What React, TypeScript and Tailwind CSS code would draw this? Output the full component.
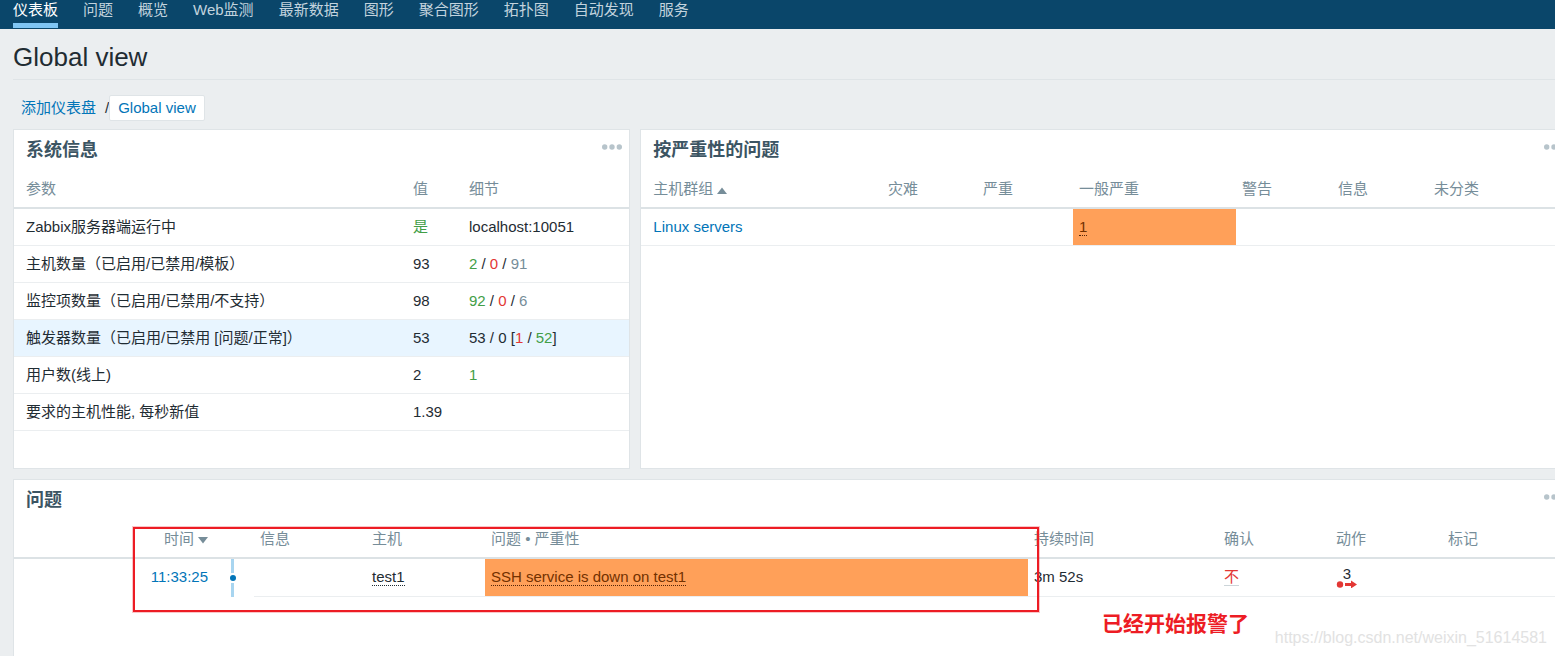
import { clsx } from "clsx";
import type { ReactNode } from "react";

const menu = ["仪表板", "问题", "概览", "Web监测", "最新数据", "图形", "聚合图形", "拓扑图", "自动发现", "服务"];

const severities = [
  { name: "灾难", width: "w-[95px]", count: 0 },
  { name: "严重", width: "w-[96px]", count: 0 },
  { name: "一般严重", width: "w-[163px]", count: 1 },
  { name: "警告", width: "w-[96px]", count: 0 },
  { name: "信息", width: "w-[96px]", count: 0 },
  { name: "未分类", width: "w-[143px]", count: 0 }
];

const Green = ({ children }: { children: ReactNode }) => <span className="text-[#429e47]">{children}</span>;
const Red = ({ children }: { children: ReactNode }) => <span className="text-[#e33734]">{children}</span>;
const Grey = ({ children }: { children: ReactNode }) => <span className="text-[#768d99]">{children}</span>;

const systemInfo: { name: string; value: ReactNode; details?: ReactNode; active?: boolean }[] = [
  { name: "Zabbix服务器端运行中", value: <Green>是</Green>, details: "localhost:10051" },
  { name: "主机数量（已启用/已禁用/模板）", value: "93", details: <><Green>2</Green> / <Red>0</Red> / <Grey>91</Grey></> },
  { name: "监控项数量（已启用/已禁用/不支持）", value: "98", details: <><Green>92</Green> / <Red>0</Red> / <Grey>6</Grey></> },
  { name: "触发器数量（已启用/已禁用 [问题/正常]）", value: "53", details: <>53 / 0 [<Red>1</Red> / <Green>52</Green>]</>, active: true },
  { name: "用户数(线上)", value: "2", details: <Green>1</Green> },
  { name: "要求的主机性能, 每秒新值", value: "1.39" }
];

function Widget({ title, className, children }: { title: string; className?: string; children: ReactNode }) {
  return (
    <section className={clsx("relative border border-[#dfe4e7] bg-white", className)}>
      <div className="flex h-10 items-start justify-between pl-3 pr-[7px]">
        <h2 className="text-[18px] font-bold leading-10 text-[#3c5563]">{title}</h2>
        <button className="mt-3" aria-label="操作">
          <svg className="block" width="20" height="10" viewBox="0 0 20 10" fill="#b7c4cb">
            <circle cx="2.7" cy="5" r="2.7" />
            <circle cx="10" cy="5" r="2.7" />
            <circle cx="17.3" cy="5" r="2.7" />
          </svg>
        </button>
      </div>
      {children}
    </section>
  );
}

function Th({ className, children }: { className?: string; children?: ReactNode }) {
  return (
    <th className={clsx("h-[39px] whitespace-nowrap border-b-2 border-[#dce2e5] px-1.5 text-left font-normal text-[#768d99] first:pl-3", className)}>
      {children}
    </th>
  );
}

function Td({ className, children }: { className?: string; children?: ReactNode }) {
  return <td className={clsx("whitespace-nowrap border-b border-[#ebeef0] px-1.5 first:pl-3", className)}>{children}</td>;
}

function SortArrow({ down }: { down?: boolean }) {
  return (
    <svg className="ml-1 inline-block align-baseline" width="10" height="7" viewBox="0 0 10 7" fill="#768d99">
      <path d={down ? "M0 0h10L5 6.5z" : "M0 7h10L5 .5z"} />
    </svg>
  );
}

function SystemInfo() {
  return (
    <Widget title="系统信息" className="pb-[37px]">
      <table className="w-full table-fixed border-separate border-spacing-0">
        <thead>
          <tr>
            <Th className="w-[393px]">参数</Th>
            <Th className="w-14">值</Th>
            <Th>细节</Th>
          </tr>
        </thead>
        <tbody>
          {systemInfo.map((row) => (
            <tr key={row.name} className={clsx("h-[37px]", row.active && "bg-[#e8f5ff]")}>
              <Td>{row.name}</Td>
              <Td>{row.value}</Td>
              <Td>{row.details}</Td>
            </tr>
          ))}
        </tbody>
      </table>
    </Widget>
  );
}

function ProblemsBySeverity() {
  return (
    <Widget title="按严重性的问题">
      <table className="w-full table-fixed border-separate border-spacing-0">
        <thead>
          <tr>
            <Th>主机群组<SortArrow /></Th>
            {severities.map((s) => <Th key={s.name} className={s.width}>{s.name}</Th>)}
          </tr>
        </thead>
        <tbody>
          <tr className="h-[37px]">
            <Td><a href="#" className="text-[#0275b8]">Linux servers</a></Td>
            {severities.map((s) => (
              <Td key={s.name} className={clsx(s.count > 0 && "bg-[#ffa059] text-[#733100]")}>
                {s.count > 0 ? <button className="border-b border-dotted border-[#52250a] leading-[17px]">{s.count}</button> : null}
              </Td>
            ))}
          </tr>
        </tbody>
      </table>
    </Widget>
  );
}

function Problems() {
  return (
    <Widget title="问题" className="col-span-2 border-b-0">
      <table className="w-full table-fixed border-separate border-spacing-0">
        <thead>
          <tr>
            <Th className="w-[200px] text-right">时间<SortArrow down /></Th>
            <Th className="w-10" />
            <Th className="w-28">信息</Th>
            <Th className="w-[119px]">主机</Th>
            <Th className="w-[543px]">问题 • 严重性</Th>
            <Th className="w-[190px]">持续时间</Th>
            <Th className="w-28">确认</Th>
            <Th className="w-28">动作</Th>
            <Th>标记</Th>
          </tr>
        </thead>
        <tbody>
          <tr className="h-[38px]">
            <Td className="border-b-0 pb-0.5 text-right"><a href="#" className="text-[#0275b8]">11:33:25</a></Td>
            <td className="pl-4">
              <svg className="block" width="6" height="38" viewBox="0 0 6 38">
                <path d="M1 0h3v14H1zM1 24h3v14H1z" fill="#a8d5f0" />
                <circle cx="3" cy="19" r="3" fill="#0275b8" />
              </svg>
            </td>
            <Td />
            <Td className="pb-0.5"><button className="border-b border-dotted border-[#1f2c33] leading-[17px]">test1</button></Td>
            <Td className="bg-[#ffa059] bg-clip-padding pb-0.5 text-[#733100]">
              <button className="border-b border-dotted border-[#52250a] leading-[17px]">SSH service is down on test1</button>
            </Td>
            <Td className="pb-0.5">3m 52s</Td>
            <Td className="pb-0.5"><a href="#" className="border-b border-[#ccd5d9] text-[#e33734]">不</a></Td>
            <Td>
              <button className="flex w-[22px] flex-col items-center leading-3">
                3
                <svg width="22" height="8" viewBox="0 0 22 8" fill="#e33734">
                  <circle cx="4" cy="4.5" r="3.2" />
                  <path d="M9 3h6V.6l6 3.9-6 3.9V6H9z" />
                </svg>
              </button>
            </Td>
            <Td />
          </tr>
        </tbody>
      </table>

      {/* marker notes drawn over the problem list */}
      <div className="pointer-events-none absolute left-[119px] top-[47px] h-[85px] w-[906px] border-2 border-[#ed1c24] shadow-[0_0_0_1px_rgba(237,28,36,0.25)]" />
      <p className="absolute left-[1088px] top-[132px] whitespace-nowrap text-[21px] font-bold leading-6 text-[#ed1c24]">已经开始报警了</p>
      <p className="absolute right-6 top-[148px] whitespace-nowrap text-base leading-5 text-[#e2e2e2]">https://blog.csdn.net/weixin_51614581</p>
    </Widget>
  );
}

export default function App() {
  return (
    <div className="flex min-h-screen flex-col overflow-hidden bg-[#ebeef0] font-['Liberation_Sans','Noto_Sans_CJK_SC',sans-serif] text-[15px] leading-5 text-[#1f2c33]">
      <nav className="flex gap-[25px] bg-[#0a466a] px-[13px] pb-px">
        {menu.map((item, i) => (
          <a
            key={item}
            href="#"
            className={clsx("whitespace-nowrap border-b-[5px] pb-[3px]", i === 0 ? "border-[#7fc5f3] text-white" : "border-transparent text-[#c2d3de]")}
          >
            {item}
          </a>
        ))}
      </nav>

      <header className="ml-[13px] border-b border-[#dfe4e7] pb-[7px] pt-[13px]">
        <h1 className="text-[26px] leading-[30px]">Global view</h1>
      </header>

      <div className="flex items-center pb-2 pl-[21px] pt-[15px] text-[#0275b8]">
        <a href="#">添加仪表盘</a>
        <span className="ml-[9px] text-[#1f2c33]">/</span>
        <a href="#" className="rounded-xs border border-[#dfe4e7] bg-white px-2 py-0.5">Global view</a>
      </div>

      {/* the dashboard runs a little past the right edge of the window */}
      <main className="-mr-[17px] ml-[13px] grid flex-1 grid-cols-[39.6%_1fr] grid-rows-[auto_1fr] gap-2.5">
        <SystemInfo />
        <ProblemsBySeverity />
        <Problems />
      </main>
    </div>
  );
}
